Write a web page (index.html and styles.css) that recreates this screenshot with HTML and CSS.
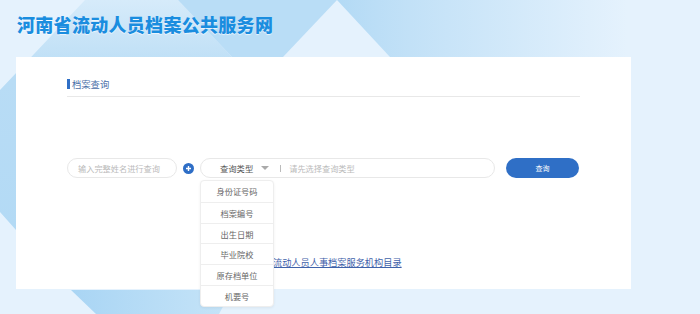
FILE: index.html
```html
<!DOCTYPE html>
<html lang="zh-CN">
<head>
<meta charset="utf-8">
<title>河南省流动人员档案公共服务网</title>
<link rel="stylesheet" href="styles.css">
</head>
<body>
<header class="top">
  <h1 class="site-title">河南省流动人员档案公共服务网</h1>
</header>
<main class="card">
  <div class="sec-title">档案查询</div>
  <div class="search">
    <div class="pill name"><span class="ph">输入完整姓名进行查询</span></div>
    <span class="add">
      <svg width="11" height="11" viewBox="0 0 11 11"><circle cx="5.5" cy="5.5" r="5.5" fill="#2e6ec6"/><path d="M3 5.5h5M5.5 3v5" stroke="#fff" stroke-width="1.4"/></svg>
    </span>
    <div class="pill query">
      <span class="type">查询类型</span>
      <span class="caret"></span>
      <span class="sep"></span>
      <span class="ph">请先选择查询类型</span>
      <ul class="menu">
        <li>身份证号码</li>
        <li>档案编号</li>
        <li>出生日期</li>
        <li>毕业院校</li>
        <li>原存档单位</li>
        <li>机要号</li>
      </ul>
    </div>
    <button class="btn">查询</button>
  </div>
  <div class="dir"><a href="#">流动人员人事档案服务机构目录</a></div>
</main>
</body>
</html>
```
FILE: styles.css
```css
* { box-sizing: border-box; }
html, body { margin: 0; padding: 0; }
body {
  width: 700px;
  height: 314px;
  overflow: hidden;
  font-family: "Noto Sans CJK SC", "Noto Sans", sans-serif;
  background: #e5f2fd url("data:image/svg+xml,%3Csvg xmlns='http://www.w3.org/2000/svg' width='700' height='314'%3E%3Cdefs%3E%3ClinearGradient id='a' x1='0' y1='0' x2='0' y2='1'%3E%3Cstop offset='0' stop-color='%23d6ebfa'/%3E%3Cstop offset='0.35' stop-color='%23b8dcf5'/%3E%3Cstop offset='1' stop-color='%23b3daf5'/%3E%3C/linearGradient%3E%3ClinearGradient id='b' x1='0' y1='0' x2='1' y2='0'%3E%3Cstop offset='0' stop-color='%23b3daf5'/%3E%3Cstop offset='0.2' stop-color='%23c2e1f7'/%3E%3Cstop offset='0.8' stop-color='%23e5f2fd'/%3E%3C/linearGradient%3E%3ClinearGradient id='c' x1='0' y1='0' x2='1' y2='0'%3E%3Cstop offset='0' stop-color='%23a9d5f4'/%3E%3Cstop offset='1' stop-color='%23c6e4f8'/%3E%3C/linearGradient%3E%3C/defs%3E%3Cpolygon points='85,0 178,0 232,57 16,57 16,230 0,212 0,90' fill='url(%23a)'/%3E%3Cpolygon points='178,0 337,0 283,57 232,57' fill='%23b9ddf6'/%3E%3Cpolygon points='337,0 700,0 700,57 390,57' fill='url(%23b)'/%3E%3Cpolygon points='71,290 232,290 219,314 96,314' fill='url(%23c)'/%3E%3C/svg%3E") no-repeat 0 0;
}

.top { height: 57px; padding-left: 17px; }
.site-title {
  margin: 0;
  padding-top: 13px;
  font-size: 18px;
  line-height: 22px;
  letter-spacing: 0.3px;
  font-weight: 900;
  color: #1a8ddf;
  text-shadow: 0 1px 1px rgba(255, 255, 255, 0.7);
}

.card {
  margin-left: 16px;
  width: 615px;
  height: 232px;
  background: #fff;
  padding: 21px 51px 0;
}

.sec-title {
  position: relative;
  height: 19px;
  border-bottom: 1px solid #e8e8e8;
  padding-left: 5px;
  font-size: 9.3px;
  line-height: 12px;
  color: #4a6ea8;
}
.sec-title::before {
  content: "";
  position: absolute;
  left: 0;
  top: 1px;
  width: 3px;
  height: 10px;
  background: #2f6fc6;
}

.search {
  display: flex;
  align-items: center;
  height: 20px;
  margin-top: 61px;
}
.pill {
  height: 20px;
  border: 1px solid #e8e8e8;
  border-radius: 10px;
  display: flex;
  align-items: center;
  background: #fff;
}
.ph { font-size: 8.2px; color: #bbb; white-space: nowrap; }
.name { width: 110px; padding-left: 10px; margin-right: 6px; }
.add { width: 11px; height: 11px; display: block; margin-right: 6px; }
.add svg { display: block; }
.query { position: relative; width: 295px; padding-left: 19px; margin-right: 11px; }
.type { font-size: 8.3px; color: #555; white-space: nowrap; }
.caret {
  margin-left: 8px;
  width: 0;
  height: 0;
  border-left: 4px solid transparent;
  border-right: 4px solid transparent;
  border-top: 4px solid #aaa;
}
.sep { margin-left: 11px; width: 1px; height: 7px; background: #bbb; }
.query .ph { margin-left: 8px; }

.btn {
  width: 73px;
  height: 20px;
  border: 0;
  border-radius: 10px;
  background: #2f6fc6;
  color: #fff;
  font-family: inherit;
  font-size: 7px;
  padding: 0;
  cursor: pointer;
}

.menu {
  position: absolute;
  left: -1px;
  top: 21px;
  z-index: 5;
  margin: 0;
  padding: 0;
  list-style: none;
  width: 74px;
  background: #fff;
  border: 1px solid #eee;
  border-radius: 4px;
  box-shadow: 0 1px 3px rgba(0, 0, 0, 0.06);
}
.menu li {
  height: 20.8px;
  line-height: 20.8px;
  text-align: center;
  font-size: 8.2px;
  color: #666;
  border-top: 1px solid #eee;
}
.menu li:first-child { border-top: 0; }

.dir {
  margin-top: 78px;
  padding-left: 206px;
  font-size: 9.2px;
  line-height: 12px;
}
.dir a { color: #3f62aa; text-decoration: underline; }
```
